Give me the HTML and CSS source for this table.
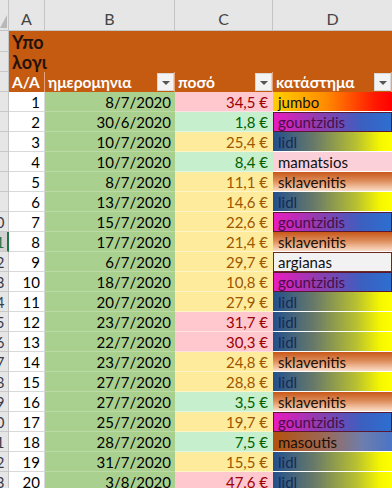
FILE: index.html
```html
<!DOCTYPE html>
<html>
<head>
<meta charset="utf-8">
<link rel="stylesheet" href="styles.css">
</head>
<body>
<div class="sheet">
  <div class="row colhead">
    <div class="corner"><span class="tri"></span></div>
    <div class="ch">A</div>
    <div class="ch">B</div>
    <div class="ch">C</div>
    <div class="ch last">D</div>
  </div>
  <div class="row titlerow">
    <div class="rhs"><div class="rh"><span>1</span></div><div class="rh"><span>2</span></div></div>
    <div class="title">Υπο<br>λογι</div>
    <div class="title-fill"></div>
  </div>
  <div class="row thead">
    <div class="rh"><span>3</span></div>
    <div class="th">Α/Α</div>
    <div class="th">ημερομηνια<span class="dd"></span></div>
    <div class="th">ποσό<span class="dd"></span></div>
    <div class="th">κατάστημα<span class="dd"></span></div>
  </div>

  <div class="row"><div class="rh"><span>4</span></div><div class="num">1</div><div class="date">8/7/2020</div><div class="amt bad">34,5 €</div><div class="shop jumbo">jumbo</div></div>
  <div class="row"><div class="rh"><span>5</span></div><div class="num">2</div><div class="date">30/6/2020</div><div class="amt good">1,8 €</div><div class="shop gountzidis">gountzidis</div></div>
  <div class="row"><div class="rh"><span>6</span></div><div class="num">3</div><div class="date">10/7/2020</div><div class="amt mid">25,4 €</div><div class="shop lidl">lidl</div></div>
  <div class="row"><div class="rh"><span>7</span></div><div class="num">4</div><div class="date">10/7/2020</div><div class="amt good">8,4 €</div><div class="shop mamatsios">mamatsios</div></div>
  <div class="row"><div class="rh"><span>8</span></div><div class="num">5</div><div class="date">8/7/2020</div><div class="amt mid">11,1 €</div><div class="shop sklavenitis">sklavenitis</div></div>
  <div class="row"><div class="rh"><span>9</span></div><div class="num">6</div><div class="date">13/7/2020</div><div class="amt mid">14,6 €</div><div class="shop lidl">lidl</div></div>
  <div class="row"><div class="rh"><span>10</span></div><div class="num">7</div><div class="date">15/7/2020</div><div class="amt mid">22,6 €</div><div class="shop gountzidis">gountzidis</div></div>
  <div class="row"><div class="rh active"><span>11</span></div><div class="num">8</div><div class="date">17/7/2020</div><div class="amt mid">21,4 €</div><div class="shop sklavenitis">sklavenitis</div></div>
  <div class="row"><div class="rh"><span>12</span></div><div class="num">9</div><div class="date">6/7/2020</div><div class="amt mid">29,7 €</div><div class="shop argianas">argianas</div></div>
  <div class="row"><div class="rh"><span>13</span></div><div class="num">10</div><div class="date">18/7/2020</div><div class="amt mid">10,8 €</div><div class="shop gountzidis">gountzidis</div></div>
  <div class="row"><div class="rh"><span>14</span></div><div class="num">11</div><div class="date">20/7/2020</div><div class="amt mid">27,9 €</div><div class="shop lidl">lidl</div></div>
  <div class="row"><div class="rh"><span>15</span></div><div class="num">12</div><div class="date">23/7/2020</div><div class="amt bad">31,7 €</div><div class="shop lidl">lidl</div></div>
  <div class="row"><div class="rh"><span>16</span></div><div class="num">13</div><div class="date">22/7/2020</div><div class="amt bad">30,3 €</div><div class="shop lidl">lidl</div></div>
  <div class="row"><div class="rh"><span>17</span></div><div class="num">14</div><div class="date">23/7/2020</div><div class="amt mid">24,8 €</div><div class="shop sklavenitis">sklavenitis</div></div>
  <div class="row"><div class="rh"><span>18</span></div><div class="num">15</div><div class="date">27/7/2020</div><div class="amt mid">28,8 €</div><div class="shop lidl">lidl</div></div>
  <div class="row"><div class="rh"><span>19</span></div><div class="num">16</div><div class="date">27/7/2020</div><div class="amt good">3,5 €</div><div class="shop sklavenitis">sklavenitis</div></div>
  <div class="row"><div class="rh"><span>20</span></div><div class="num">17</div><div class="date">25/7/2020</div><div class="amt mid">19,7 €</div><div class="shop gountzidis">gountzidis</div></div>
  <div class="row"><div class="rh"><span>21</span></div><div class="num">18</div><div class="date">28/7/2020</div><div class="amt good">7,5 €</div><div class="shop masoutis">masoutis</div></div>
  <div class="row"><div class="rh"><span>22</span></div><div class="num">19</div><div class="date">31/7/2020</div><div class="amt mid">15,5 €</div><div class="shop lidl">lidl</div></div>
  <div class="row"><div class="rh"><span>23</span></div><div class="num">20</div><div class="date">3/8/2020</div><div class="amt bad">47,6 €</div><div class="shop lidl">lidl</div></div>
</div>
</body>
</html>
```

FILE: styles.css
```css
* { box-sizing: border-box; }
html, body { margin: 0; padding: 0; background: #ffffff; }
body {
  font-family: Lato, "Open Sans", "Noto Sans", sans-serif;
  font-size: 15px;
  color: #000;
  overflow: hidden;
}
.sheet { width: 392px; }
.row {
  display: grid;
  grid-template-columns: 9px 36px 130px 98px 119px;
  height: 20px;
}
/* column headers */
.colhead { height: 31px; background: #e6e6e6; border-bottom: 1px solid #c4c4c4; }
.corner { position: relative; border-right: 1px solid #c4c4c4; }
.tri {
  position: absolute; right: 1px; bottom: 2px;
  width: 0; height: 0;
  border-left: 7px solid transparent;
  border-bottom: 13px solid #b8b8b8;
}
.ch {
  display: flex; align-items: flex-end; justify-content: center;
  padding-bottom: 2px;
  font-size: 16px; color: #444;
  border-right: 1px solid #c4c4c4;
}
.ch.last { border-right: none; }
/* row headers */
.rh {
  background: #e6e6e6;
  border-right: 1px solid #c4c4c4;
  border-bottom: 1px solid #c8c8c8;
  display: flex; align-items: center; justify-content: flex-start;
  overflow: hidden;
  font-size: 15px; color: #3a3a4a;
}
.rh span { margin-left: -13px; flex-shrink: 0; }
.rh.active { background: #d2d2d2; border-right: 2px solid #217346; color: #217346; }
/* title rows */
.titlerow { height: 41px; background: #c55a11; }
.rhs { display: flex; flex-direction: column; background: #e6e6e6; }
.rhs .rh { height: 21px; }
.rhs .rh:last-child { height: 20px; }
.title {
  grid-column: 2 / 3;
  padding: 1px 0 0 3px;
  font-weight: 700; font-size: 18px; line-height: 20px;
  color: #24120a;
  border-bottom: 1px solid #f0c8a8;
  white-space: nowrap;
}
.title-fill { grid-column: 3 / 6; border-bottom: 1px solid #f0c8a8; }
/* table header */
.thead .th {
  position: relative;
  background: #c55a11; color: #fff;
  font-weight: 700; font-size: 15.5px;
  display: flex; align-items: center;
  padding-left: 3px;
  border-right: 1px solid #e8a478;
  white-space: nowrap;
}
.dd {
  position: absolute; right: 0; top: 1px;
  width: 17px; height: 18px;
  background: #f3f3f3;
  border: 1px solid #d8d8d8;
}
.dd::after {
  content: ""; position: absolute; left: 4px; top: 7px;
  border-left: 4px solid transparent; border-right: 4px solid transparent;
  border-top: 4px solid #555;
}
/* data cells */
.num {
  display: flex; align-items: center; justify-content: flex-end;
  padding-right: 4px;
  border-bottom: 1px solid #d9d9d9;
  border-right: 1px solid #d9d9d9;
}
.date {
  display: flex; align-items: center; justify-content: flex-end;
  padding-right: 4px;
  background: #a9d08e;
  border-bottom: 1px solid #bcdaa6;
}
.amt {
  display: flex; align-items: center; justify-content: flex-end;
  padding-right: 5px;
  border-bottom: 1px solid rgba(255,255,255,0.45);
}
.bad { background: #ffc7ce; color: #9c0006; }
.good { background: #c6efce; color: #006100; }
.mid { background: #ffeb9c; color: #9c5700; }
.shop {
  display: flex; align-items: center;
  padding-left: 5px;
  border-bottom: 1px solid #ffffff;
}
.jumbo { background: linear-gradient(90deg, #ffd000 0%, #ff8a00 45%, #ff1a00 85%, #ff0000 100%); color: #111; }
.gountzidis {
  background: linear-gradient(90deg, #e81cbf 0%, #8a3fb0 40%, #3c5fc0 75%, #2c6fd0 100%);
  color: #4a0d48;
  border: 1px solid #5a1830;
  padding-left: 4px;
}
.lidl { background: linear-gradient(90deg, #22508e 0%, #6a7a68 35%, #b8c030 70%, #f6f600 90%, #ffff00 100%); color: #142a55; }
.mamatsios { background: #fcd0d8; color: #111; }
.sklavenitis { background: linear-gradient(180deg, #c8581a 0%, #dc8a58 45%, #f0c0a0 80%, #f8dcc8 100%); color: #1c1008; }
.argianas { background: #f2f2f2; color: #111; border: 1px solid #6a2a20; padding-left: 4px; }
.masoutis { background: linear-gradient(90deg, #b4520f 0%, #9a6a5a 45%, #6e7eac 75%, #4a74c6 100%); color: #1c1008; }
```
